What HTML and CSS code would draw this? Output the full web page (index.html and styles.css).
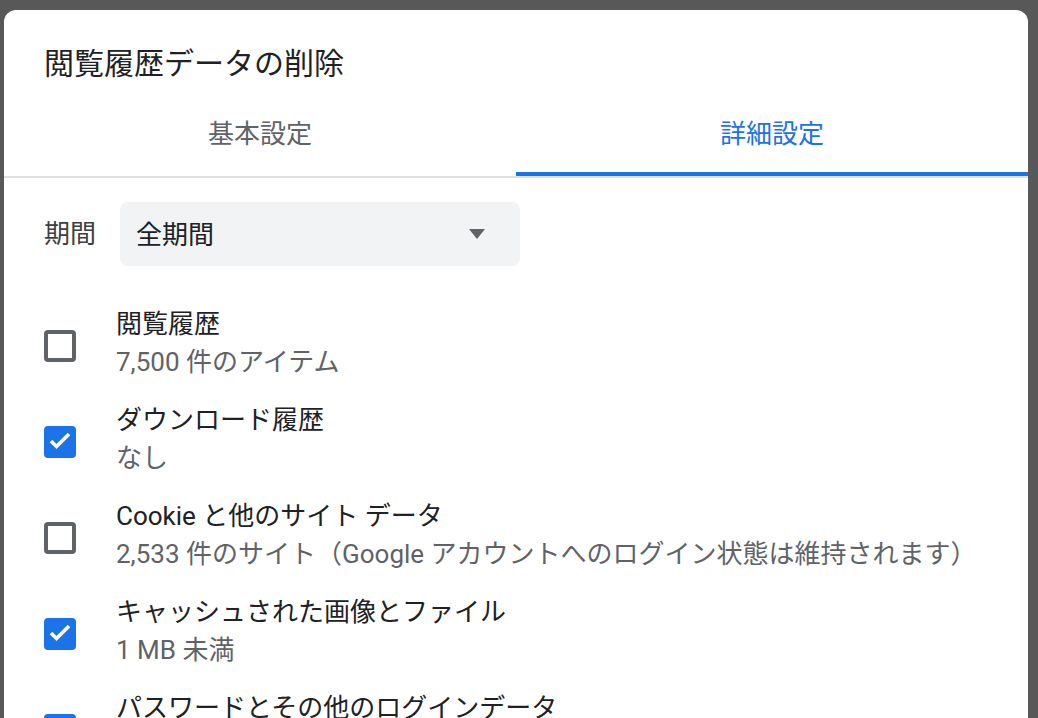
FILE: index.html
```html
<!doctype html>
<html lang="ja">
<head>
    <meta charset="UTF-8">
    <meta name="viewport" content="width=device-width, initial-scale=1.0">
    <title>閲覧履歴データの削除</title>
    <link rel="stylesheet" href="styles.css">
</head>
<body>
<div class="dialog">
    <h1 class="title">閲覧履歴データの削除</h1>
    <div class="tabs">
        <div class="tab">基本設定</div>
        <div class="tab active">詳細設定</div>
    </div>
    <div class="content">
        <div class="period">
            <span class="periodLabel">期間</span>
            <div class="select">
                <span>全期間</span>
                <span class="arrow"></span>
            </div>
        </div>
        <ul class="items">
            <li class="item">
                <span class="box"></span>
                <div class="text">
                    <div class="label">閲覧履歴</div>
                    <div class="sub">7,500 件のアイテム</div>
                </div>
            </li>
            <li class="item">
                <span class="box checked">
                    <svg viewBox="0 0 24 24"><polyline points="3,11 8.5,16.5 21,4"/></svg>
                </span>
                <div class="text">
                    <div class="label">ダウンロード履歴</div>
                    <div class="sub">なし</div>
                </div>
            </li>
            <li class="item">
                <span class="box"></span>
                <div class="text">
                    <div class="label">Cookie と他のサイト データ</div>
                    <div class="sub">2,533 件のサイト（Google アカウントへのログイン状態は維持されます）</div>
                </div>
            </li>
            <li class="item">
                <span class="box checked">
                    <svg viewBox="0 0 24 24"><polyline points="3,11 8.5,16.5 21,4"/></svg>
                </span>
                <div class="text">
                    <div class="label">キャッシュされた画像とファイル</div>
                    <div class="sub">1 MB 未満</div>
                </div>
            </li>
            <li class="item">
                <span class="box checked">
                    <svg viewBox="0 0 24 24"><polyline points="3,11 8.5,16.5 21,4"/></svg>
                </span>
                <div class="text">
                    <div class="label">パスワードとその他のログインデータ</div>
                </div>
            </li>
        </ul>
    </div>
</div>
</body>
</html>
```

FILE: styles.css
```css
* {
    padding: 0;
    margin: 0;
    list-style: none;
    box-sizing: border-box;
}

html, body {
    height: 100%;
    overflow: hidden;
}

body {
    background-color: #585858;
    font-family: Roboto, "Noto Sans CJK JP", sans-serif;
    color: #202124;
}

.dialog {
    margin: 10px 0 0 4px;
    width: 1024px;
    min-height: 760px;
    background-color: #fff;
    border-radius: 12px 12px 0 0;
    padding-top: 34px;
}

.title {
    padding: 0 40px;
    font-size: 30px;
    font-weight: normal;
    line-height: 40px;
    color: #202124;
}

.tabs {
    display: flex;
    margin-top: 12px;
    border-bottom: 2px solid #e0e0e0;
}

.tabs .tab {
    flex: 1;
    height: 80px;
    line-height: 76px;
    text-align: center;
    font-size: 26px;
    color: #5f6368;
    border-bottom: 4px solid transparent;
}

.tabs .tab.active {
    color: #1a73e8;
    border-bottom-color: #1a73e8;
}

.content {
    padding: 24px 40px 0;
}

.period {
    display: flex;
    align-items: center;
    gap: 24px;
}

.periodLabel {
    font-size: 26px;
    color: #3c4043;
    padding-bottom: 6px;
}

.select {
    display: flex;
    align-items: center;
    justify-content: space-between;
    width: 400px;
    height: 64px;
    padding: 0 35px 4px 16px;
    background-color: #f1f3f4;
    border-radius: 8px;
    font-size: 26px;
    color: #202124;
}

.select .arrow {
    width: 0;
    height: 0;
    margin-top: 4px;
    border-left: 8px solid transparent;
    border-right: 8px solid transparent;
    border-top: 10px solid #5f6368;
}

.items {
    margin-top: 30px;
}

.items .item {
    display: flex;
    align-items: flex-start;
    gap: 40px;
    padding: 10px 0;
}

/* box sits on the middle of a two-line row */
.items .box {
    flex: none;
    width: 32px;
    height: 32px;
    margin-top: 24px;
    border: 4px solid #5f6368;
    border-radius: 4px;
}

.items .box.checked {
    background-color: #1a73e8;
    border-color: #1a73e8;
}

.items .box svg {
    display: block;
    width: 24px;
    height: 24px;
    fill: none;
    stroke: #fff;
    stroke-width: 3.6;
}

.items .label {
    font-size: 26px;
    line-height: 36px;
    color: #202124;
}

.items .sub {
    font-size: 26px;
    line-height: 40px;
    color: #5f6368;
}
```
